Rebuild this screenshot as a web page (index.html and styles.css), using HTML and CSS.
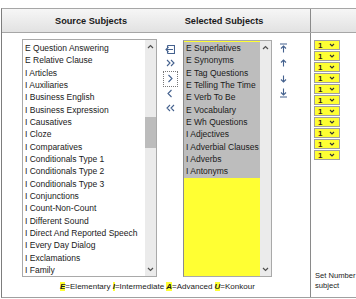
FILE: index.html
```html
<!DOCTYPE html>
<html lang="en">
<head>
    <meta charset="UTF-8">
    <title>Subjects</title>
    <link rel="stylesheet" href="styles.css">
</head>
<body>

    <div class="frame">
        <div class="head">
            <div class="head-main">
                <div class="h-src">Source Subjects</div>
                <div class="h-sel">Selected Subjects</div>
            </div>
            <div class="head-side"></div>
        </div>

        <div class="content">
            <div class="main">
                <div class="pickers">
                    <div class="listbox src">
                        <div class="items">
                            <div class="item">E Question Answering</div>
                            <div class="item">E Relative Clause</div>
                            <div class="item">I Articles</div>
                            <div class="item">I Auxiliaries</div>
                            <div class="item">I Business English</div>
                            <div class="item">I Business Expression</div>
                            <div class="item">I Causatives</div>
                            <div class="item">I Cloze</div>
                            <div class="item">I Comparatives</div>
                            <div class="item">I Conditionals Type 1</div>
                            <div class="item">I Conditionals Type 2</div>
                            <div class="item">I Conditionals Type 3</div>
                            <div class="item">I Conjunctions</div>
                            <div class="item">I Count-Non-Count</div>
                            <div class="item">I Different Sound</div>
                            <div class="item">I Direct And Reported Speech</div>
                            <div class="item">I Every Day Dialog</div>
                            <div class="item">I Exclamations</div>
                            <div class="item">I Family</div>
                        </div>
                        <div class="scroll">
                            <svg class="arrow" width="7" height="5" viewBox="0 0 7 5"><path d="M1 4 L3.5 1.5 L6 4" /></svg>
                            <div class="thumb"></div>
                            <svg class="arrow down" width="7" height="5" viewBox="0 0 7 5"><path d="M1 1 L3.5 3.5 L6 1" /></svg>
                        </div>
                    </div>

                    <div class="moves">
                        <div class="btn b14">
                            <svg width="10" height="9" viewBox="0 0 10 9"><path d="M2.5 0.5 H9.5 V8.5 H2.5 M2.5 0.5 V2.5 M2.5 8.5 V6.5 M8 4.5 H1 M3.5 2 L1 4.5 L3.5 7" /></svg>
                        </div>
                        <div class="btn b14">
                            <svg width="9" height="8" viewBox="0 0 9 8"><path d="M1 1 L4 4 L1 7 M5 1 L8 4 L5 7" /></svg>
                        </div>
                        <div class="btn b17">
                            <div class="focus">
                                <svg width="6" height="9" viewBox="0 0 6 9"><path d="M1.5 1 L5 4.5 L1.5 8" /></svg>
                            </div>
                        </div>
                        <div class="btn b13">
                            <svg width="6" height="9" viewBox="0 0 6 9"><path d="M4.5 1 L1 4.5 L4.5 8" /></svg>
                        </div>
                        <div class="btn b15">
                            <svg width="9" height="8" viewBox="0 0 9 8"><path d="M4 1 L1 4 L4 7 M8 1 L5 4 L8 7" /></svg>
                        </div>
                    </div>

                    <div class="listbox sel">
                        <div class="items">
                            <div class="item">E Superlatives</div>
                            <div class="item">E Synonyms</div>
                            <div class="item">E Tag Questions</div>
                            <div class="item">E Telling The Time</div>
                            <div class="item">E Verb To Be</div>
                            <div class="item">E Vocabulary</div>
                            <div class="item">E Wh Questions</div>
                            <div class="item">I Adjectives</div>
                            <div class="item">I Adverbial Clauses</div>
                            <div class="item">I Adverbs</div>
                            <div class="item">I Antonyms</div>
                        </div>
                        <div class="scroll">
                            <svg class="arrow" width="7" height="5" viewBox="0 0 7 5"><path d="M1 4 L3.5 1.5 L6 4" /></svg>
                            <svg class="arrow down" width="7" height="5" viewBox="0 0 7 5"><path d="M1 1 L3.5 3.5 L6 1" /></svg>
                        </div>
                    </div>

                    <div class="orders">
                        <div class="btn b15">
                            <svg width="9" height="10" viewBox="0 0 9 10"><path d="M1 1 H8 M4.5 9.5 V3 M2 5.5 L4.5 3 L7 5.5" /></svg>
                        </div>
                        <div class="btn b15">
                            <svg width="9" height="8" viewBox="0 0 9 8"><path d="M4.5 7.5 V1 M2 3.5 L4.5 1 L7 3.5" /></svg>
                        </div>
                        <div class="btn b17">
                            <svg width="9" height="8" viewBox="0 0 9 8"><path d="M4.5 0.5 V7 M2 4.5 L4.5 7 L7 4.5" /></svg>
                        </div>
                        <div class="btn b11">
                            <svg width="9" height="10" viewBox="0 0 9 10"><path d="M4.5 0.5 V7 M2 4.5 L4.5 7 L7 4.5 M1 9 H8" /></svg>
                        </div>
                    </div>
                </div>

                <div class="legend">
                    <b>E</b>=Elementary <b>I</b>=Intermediate <b>A</b>=Advanced <b>U</b>=Konkour
                </div>
            </div>

            <div class="side">
                <div class="counts">
                    <div class="count"><span>1</span><svg width="6" height="4" viewBox="0 0 6 4"><path d="M1 1 L3 3 L5 1" /></svg></div>
                    <div class="count"><span>1</span><svg width="6" height="4" viewBox="0 0 6 4"><path d="M1 1 L3 3 L5 1" /></svg></div>
                    <div class="count"><span>1</span><svg width="6" height="4" viewBox="0 0 6 4"><path d="M1 1 L3 3 L5 1" /></svg></div>
                    <div class="count"><span>1</span><svg width="6" height="4" viewBox="0 0 6 4"><path d="M1 1 L3 3 L5 1" /></svg></div>
                    <div class="count"><span>1</span><svg width="6" height="4" viewBox="0 0 6 4"><path d="M1 1 L3 3 L5 1" /></svg></div>
                    <div class="count"><span>1</span><svg width="6" height="4" viewBox="0 0 6 4"><path d="M1 1 L3 3 L5 1" /></svg></div>
                    <div class="count"><span>1</span><svg width="6" height="4" viewBox="0 0 6 4"><path d="M1 1 L3 3 L5 1" /></svg></div>
                    <div class="count"><span>1</span><svg width="6" height="4" viewBox="0 0 6 4"><path d="M1 1 L3 3 L5 1" /></svg></div>
                    <div class="count"><span>1</span><svg width="6" height="4" viewBox="0 0 6 4"><path d="M1 1 L3 3 L5 1" /></svg></div>
                    <div class="count"><span>1</span><svg width="6" height="4" viewBox="0 0 6 4"><path d="M1 1 L3 3 L5 1" /></svg></div>
                    <div class="count"><span>1</span><svg width="6" height="4" viewBox="0 0 6 4"><path d="M1 1 L3 3 L5 1" /></svg></div>
                </div>
                <div class="note">Set Number<br>subject</div>
            </div>
        </div>
    </div>

</body>
</html>
```

FILE: styles.css
```css
body {
    margin: 0;
    background: white;
    color: #1a1a1a;
    font-family: "Liberation Sans", Arial, sans-serif;
    overflow: hidden;
}
.frame {
    margin: 8px 0 0 1px;
    border-top: 1px solid #a6a6a6;
    border-left: 1px solid #7d7d7d;
    border-bottom: 1px solid #a0a0a0;
}
.head {
    display: flex;
    height: 23px;
    border-bottom: 1px solid #a6a6a6;
    background: linear-gradient(#f6f6f6, #e2e2e2);
}
.head-main {
    width: 308px;
    display: grid;
    grid-template-columns: 178px 88px;
    align-items: center;
    font-size: 9.2px;
    font-weight: bold;
    text-align: center;
}
.head-side {
    flex: 1;
    border-left: 1px solid #8a8a8a;
}
.content {
    display: flex;
    height: 264px;
}
.main {
    width: 308px;
    padding: 6px 0 0 20px;
    box-sizing: border-box;
}
.side {
    flex: 1;
    border-left: 1px solid #8a8a8a;
    display: flex;
    flex-direction: column;
    justify-content: space-between;
    padding: 7px 0 6px 3px;
}
.pickers {
    display: flex;
    align-items: flex-start;
}
.listbox {
    display: flex;
    box-sizing: border-box;
    border: 1px solid #a9a9a9;
    overflow: hidden;
    font-size: 8.5px;
}
.listbox.src {
    width: 135px;
    height: 238px;
}
.listbox.sel {
    width: 89px;
    height: 237px;
    margin-top: 1px;
    border-left-color: #8c8c8c;
}
.items {
    flex: 1;
    overflow: hidden;
}
.src .items {
    background: white;
    padding-top: 2px;
}
.sel .items {
    background: #ffff33;
    padding-top: 1px;
}
.item {
    height: 12.33px;
    line-height: 12.33px;
    padding-left: 2px;
    white-space: nowrap;
}
.sel .item {
    background: #bdbdbd;
}
.scroll {
    width: 11px;
    background: #ebebeb;
    display: flex;
    flex-direction: column;
    align-items: center;
}
.arrow {
    margin-top: 4px;
    fill: none;
    stroke: #505050;
    stroke-width: 1.2;
}
.arrow.down {
    margin-top: auto;
    margin-bottom: 4px;
}
.thumb {
    width: 11px;
    height: 31px;
    margin-top: 68px;
    background: #bcbcbc;
}
.moves {
    width: 26px;
    padding-top: 3px;
    display: flex;
    flex-direction: column;
    align-items: center;
}
.orders {
    width: 22px;
    padding-top: 1px;
    display: flex;
    flex-direction: column;
    align-items: center;
}
.btn {
    display: flex;
    align-items: center;
    justify-content: center;
}
.btn svg {
    fill: none;
    stroke: #44618e;
    stroke-width: 1.1;
}
.b11 { height: 11px; }
.b13 { height: 13px; }
.b14 { height: 14px; }
.b15 { height: 15px; }
.b17 { height: 17px; }
.focus {
    width: 13px;
    height: 14px;
    border: 1px dotted #777;
    display: flex;
    align-items: center;
    justify-content: center;
}
.legend {
    margin-top: 5px;
    padding-left: 38px;
    font-size: 8px;
    line-height: 10px;
    white-space: nowrap;
}
.legend b {
    font-style: italic;
    background: #ffff33;
}
.counts {
    display: flex;
    flex-direction: column;
    gap: 1px;
}
.count {
    width: 26px;
    height: 10px;
    box-sizing: border-box;
    border: 1px solid #a0a0a0;
    background: #ffff33;
    display: flex;
    align-items: center;
    justify-content: space-between;
    padding: 0 4px 0 3px;
    font-size: 8px;
    font-weight: bold;
    color: #3a1a10;
}
.count svg {
    fill: none;
    stroke: #333;
    stroke-width: 1.1;
}
.note {
    font-size: 7.6px;
    line-height: 10px;
    padding-left: 1px;
    white-space: nowrap;
}
```
